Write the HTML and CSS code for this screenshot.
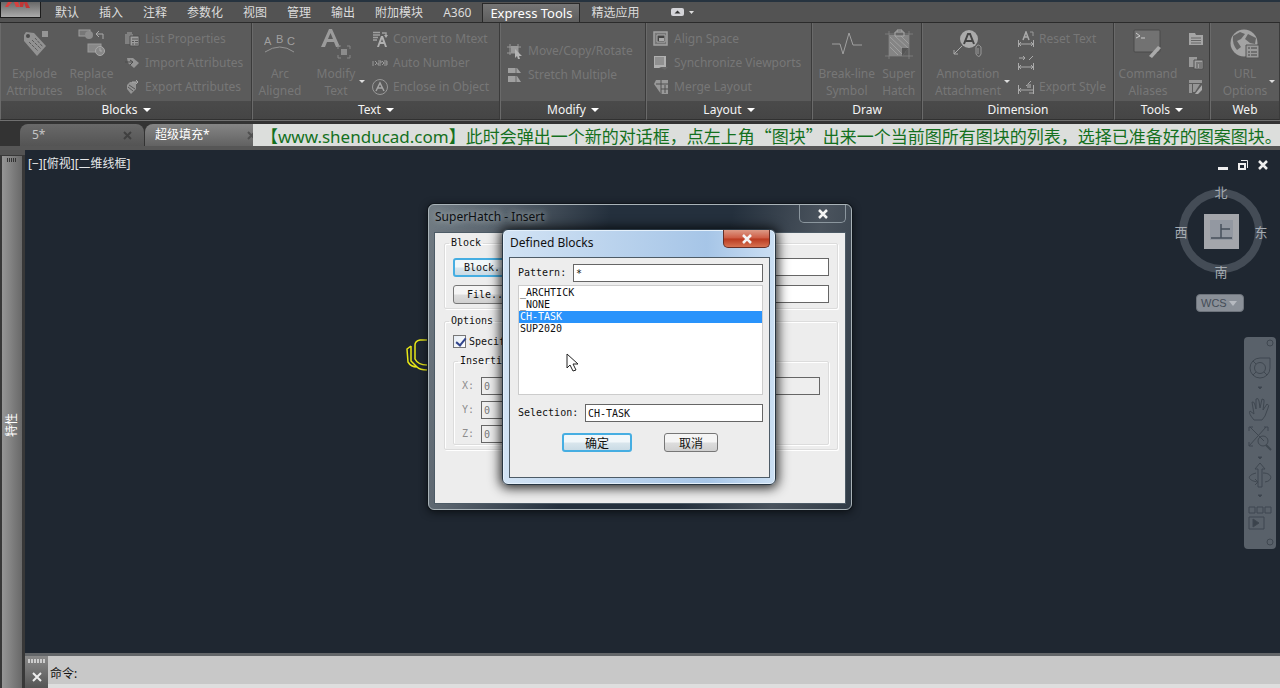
FILE: index.html
```html
<!DOCTYPE html>
<html lang="zh-CN">
<head>
<meta charset="utf-8">
<title>SuperHatch - Insert</title>
<link rel="stylesheet" href="styles.css">
</head>
<body>
<header class="topbar">
  <button class="app-button" aria-label="Application menu">
    <svg width="38" height="16" viewBox="0 0 38 16"><path d="M7 0h4L7 5H4zM13 0h4l2 5h-4z" fill="#d8403f"/><path d="M19 0h4l-1 5h-3zM23 0h3l3 6h-4z" fill="#c23636"/></svg>
  </button>
  <nav class="menu">
    <a href="#">默认</a><a href="#">插入</a><a href="#">注释</a><a href="#">参数化</a><a href="#">视图</a><a href="#">管理</a><a href="#">输出</a><a href="#">附加模块</a><a href="#">A360</a><a href="#" class="active">Express Tools</a><a href="#">精选应用</a>
    <button class="ribbon-toggle" aria-label="Minimize ribbon"><svg width="26" height="10" viewBox="0 0 26 10"><rect x="1" y="1" width="13" height="8" rx="2" fill="#d4d4d8"/><path d="M4.500 6.500L7.500 3.500l3 3z" fill="#333"/><path d="M19 4h5l-2.500 3z" fill="#ddd"/></svg></button>
  </nav>
</header>

<section class="ribbon">
  <section class="panel blocks">
    <div class="tools">
      <button class="large w57"><svg width="32" height="32" viewBox="0 0 32 32"><path d="M5 7l2-3 8 1 12 13-9 10L5 13z" fill="#929292"/><circle cx="9" cy="8" r="2" fill="#4c4c4c"/><path d="M10 14l9 9M13 12l9 9M16 10l8 9" stroke="#5b5b5b" stroke-dasharray="3 1"/><rect x="23" y="3" width="6" height="6" fill="#969696"/></svg><span>Explode<br>Attributes</span></button>
      <button class="large w57"><svg width="32" height="32" viewBox="0 0 32 32"><rect x="3" y="2" width="11" height="6" fill="#777" stroke="#a0a0a0"/><circle cx="13" cy="7" r="4" fill="#8c8c8c"/><rect x="12" y="16" width="13" height="8" fill="#888" stroke="#9b9b9b"/><circle cx="24" cy="23" r="4.500" fill="#888" stroke="#aaa"/><path d="M24 20v3h2M27 11V6h-7m3-3l-3 3 3 3" fill="none" stroke="#aaa"/></svg><span>Replace<br>Block</span></button>
      <div class="stack">
        <button><svg width="16" height="16" viewBox="0 0 16 16"><path d="M1 3h8v10H1zM3 1h5v3H3z" fill="#808080"/><path d="M6 5h9v10H6z" fill="#9c9c9c" stroke="#505050"/><path d="M8 8h6M8 10.500h2m1 0h3M8 13h2m1 0h3" stroke="#555"/></svg>List Properties</button>
        <button><svg width="16" height="16" viewBox="0 0 16 16"><path d="M3 3h6l6 5-5 5-6-5z" fill="#949494"/><path d="M1 7h7M6 5l3 2-3 3" fill="none" stroke="#4c4c4c"/></svg>Import Attributes</button>
        <button><svg width="16" height="16" viewBox="0 0 16 16"><path d="M3 6l3-3h6v7l-5 5-4-5z" fill="#949494"/><path d="M5 6l6 4M4 8l5 4" stroke="#555"/><path d="M8 3h6m-2-2l2 2-2 2" fill="none" stroke="#aaa"/></svg>Export Attributes</button>
      </div>
    </div>
    <h2>Blocks <i></i></h2>
  </section>
  <section class="panel text">
    <div class="tools">
      <button class="large w54"><svg width="32" height="32" viewBox="0 0 32 32"><g fill="#a0a0a0" font-family="Liberation Sans" font-size="11"><text x="0" y="17">A</text><text x="12" y="15">B</text><text x="23" y="17">C</text></g><path d="M1 24q15-10 29 0" fill="none" stroke="#949494"/></svg><span>Arc<br>Aligned</span></button>
      <button class="large w58 drop"><svg width="32" height="32" viewBox="0 0 32 32"><path d="M1 19L9 1h3l8 18h-4l-2-5H7l-2 5zM8 11h5L10.500 5z" fill="#9b9b9b" fill-rule="evenodd"/><path d="M18 21v-3h3m6 0h3v3m0 6v3h-3m-6 0h-3v-3" fill="none" stroke="#888"/><rect x="21" y="21" width="6" height="6" fill="#8c8c8c"/></svg><span>Modify<br>Text</span></button>
      <div class="stack">
        <button><svg width="16" height="16" viewBox="0 0 16 16"><path d="M1 1.500h7M1 4h7M1 6.500h5M1 9h4M10 2h4v3" fill="none" stroke="#a0a0a0" stroke-width="1.500"/><path d="M12 4l2 3 2-3z" fill="#aaa"/><path d="M5 16L9 5h2l4 11h-2l-1-3H8l-1 3zM9 11h2l-1-3z" fill="#b0b0b0" fill-rule="evenodd"/></svg>Convert to Mtext</button>
        <button><svg width="16" height="16" viewBox="0 0 16 16"><path d="M1 6v5M3 6l2 2-2 2M6 6h3v2H6v2h3M10 6l2 2-2 2M12 6h3v4h-3m0-2h3" fill="none" stroke="#999"/></svg>Auto Number</button>
        <button><svg width="16" height="16" viewBox="0 0 16 16"><circle cx="8" cy="8" r="7.500" fill="none" stroke="#999"/><path d="M4 12L8 4l4 8M6 9h5" fill="none" stroke="#a5a5a5" stroke-width="1.500"/></svg>Enclose in Object</button>
      </div>
    </div>
    <h2>Text <i></i></h2>
  </section>
  <section class="panel modify">
    <div class="tools">
      <div class="stack two">
        <button><svg width="16" height="16" viewBox="0 0 16 16"><path d="M3 1v11M11 1v10M0 4h14M0 10h12" stroke="#999"/><rect x="4" y="3" width="7" height="7" fill="#999"/><path d="M8 6l7 7-3 0 1 3-2 0-1-3-2 2z" fill="#b4b4b4"/></svg>Move/Copy/Rotate</button>
        <button><svg width="16" height="16" viewBox="0 0 16 16"><path d="M1 1h9l4 5H1zM1 9h9l4 6H1z" fill="#a0a0a0"/><path d="M9 1v5M9 9v6" stroke="#6a6a6a"/></svg>Stretch Multiple</button>
      </div>
    </div>
    <h2>Modify <i></i></h2>
  </section>
  <section class="panel layout">
    <div class="tools">
      <div class="stack">
        <button><svg width="16" height="16" viewBox="0 0 16 16"><path d="M1 1h13v13H1z" fill="#777" stroke="#a2a2a2" stroke-width="1.500"/><path d="M4 11V4h8v7z" fill="#444" stroke="#aaa"/><path d="M6 7h5v3H6z" fill="#aaa"/></svg>Align Space</button>
        <button><svg width="16" height="16" viewBox="0 0 16 16"><path d="M1 1h12v12H1z" fill="#b0b0b0"/><path d="M2 2h9v8H2z" fill="#909090"/><path d="M6 12h9l-3 3z" fill="#666"/></svg>Synchronize Viewports</button>
        <button><svg width="16" height="16" viewBox="0 0 16 16"><path d="M3 1h12v14H8L1 5z" fill="#999"/><path d="M3 5h12M8 1v14M8 10h7M12 6v8" stroke="#505050"/></svg>Merge Layout</button>
      </div>
    </div>
    <h2>Layout <i></i></h2>
  </section>
  <section class="panel draw">
    <div class="tools">
      <button class="large w60"><svg width="32" height="32" viewBox="0 0 32 32"><path d="M1 16h8l3 10 6-21 4 12h9" fill="none" stroke="#a0a0a0"/></svg><span>Break-line<br>Symbol</span></button>
      <button class="large w45"><svg width="32" height="32" viewBox="0 0 32 32"><path d="M6 7h20v13l-7 8H6z" fill="#858585"/><path d="M7 9l16 15M7 14l13 13M7 19l8 8M12 8l14 13M18 8l8 8" stroke="#aaa" stroke-width=".7"/><path d="M2 6h28M6 3v28M26 3v28M2 28h28" stroke="#888" stroke-width=".7"/><path d="M12 8V4h9v4zM14 4V2h5v2" fill="#666" stroke="#aaa"/><path d="M26 20h-7v8z" fill="#555"/></svg><span>Super<br>Hatch</span></button>
    </div>
    <h2>Draw</h2>
  </section>
  <section class="panel dimension">
    <div class="tools">
      <button class="large w84 drop"><svg width="32" height="32" viewBox="0 0 32 32"><circle cx="17" cy="11" r="9" fill="#aaa"/><path d="M12 16l4-10h2l4 10m-8-3h6" stroke="#444" stroke-width="2" fill="none"/><path d="M10 18l-8 8m0-4v4h4" stroke="#aaa" fill="none"/><path d="M24 26v-7q2-4 5 0v7q-2 5-5 0m2-6v6" stroke="#999" fill="none"/></svg><span>Annotation<br>Attachment</span></button>
      <div class="stack">
        <button><svg width="16" height="16" viewBox="0 0 16 16"><path d="M.5 9v7M15.500 9v7M1 13h14M3 11l-2 2 2 2M13 11l2 2-2 2" stroke="#aaa" fill="none"/><path d="M5 9l3-8 3 8M6 6h4" stroke="#aaa" stroke-width="1.500" fill="none"/><path d="M12 1h3v4" stroke="#999" fill="none"/></svg>Reset Text</button>
        <button aria-label="Update dimension"><svg width="16" height="16" viewBox="0 0 16 16"><path d="M.5 8v7M15.500 8v7M1 12h14M3 10l-2 2 2 2M13 10l2 2-2 2M1 3h6L5 1m2 2L5 5M11 5l4-4" stroke="#aaa" fill="none"/></svg></button>
        <button><svg width="16" height="16" viewBox="0 0 16 16"><path d="M.5 6v9M15.500 6v9M1 11h14M3 9l-2 2 2 2M11 14h4M8 7l5-5" stroke="#aaa" fill="none"/><path d="M9 5h4v4H9z" fill="#888"/></svg>Export Style</button>
      </div>
    </div>
    <h2>Dimension</h2>
  </section>
  <section class="panel utilities">
    <div class="tools">
      <button class="large w66"><svg width="32" height="32" viewBox="0 0 32 32"><rect x="2" y="2" width="26" height="22" rx="1" fill="#727272" stroke="#4a4a4a"/><path d="M4 5l4 3-4 2M9 10h4" stroke="#ccc" fill="none"/><path d="M17 28l9-10 3 2-9 10z" fill="#aaa"/></svg><span>Command<br>Aliases</span></button>
      <div class="stack">
        <button aria-label="System variables"><svg width="16" height="16" viewBox="0 0 16 16"><path d="M1 5V2h6l1 2h7v10H1z" fill="#a5a5a5"/><path d="M3 7h10M3 9.500h10M3 12h10" stroke="#666"/></svg></button>
        <button aria-label="List aliases"><svg width="16" height="16" viewBox="0 0 16 16"><path d="M1 2h8v10H1z" fill="#999"/><path d="M6 5h9v9H6z" fill="#a0a0a0" stroke="#505050"/><path d="M8 8h6M8 10h2m1 0h3M8 12h2m1 0h3" stroke="#555"/></svg></button>
        <button aria-label="Table editor"><svg width="16" height="16" viewBox="0 0 16 16"><path d="M1 1h13v3H1zM1 5h3v9H1zM5 5h7l-5 8H5z" fill="#959595"/><path d="M7 15l7-9v5l-4 4z" fill="#aaa"/></svg></button>
      </div>
    </div>
    <h2>Tools <i></i></h2>
  </section>
  <section class="panel web">
    <div class="tools">
      <button class="large w60 drop"><svg width="32" height="32" viewBox="0 0 32 32"><circle cx="15" cy="15" r="13.500" fill="#a3a3a3"/><path d="M4 8l7-4 5 2-4 5-4 2 4 6-4 3q-5-6-4-14zM19 6l8 4-1 6-5-1-5-4z" fill="#656565"/><path d="M17 17h13v13H17z" fill="#999" stroke="#555"/><path d="M19 20h2m1 0h6M19 24h2m1 0h6M19 27h2m1 0h6" stroke="#444"/></svg><span>URL<br>Options</span></button>
    </div>
    <h2>Web</h2>
  </section>
</section>

<div class="doc-tabs">
  <button class="doc">5*<svg width="9" height="9" viewBox="0 0 9 9"><path d="M1 1l7 7M8 1L1 8" stroke="#404040" stroke-width="2"/></svg></button>
  <button class="doc current">超级填充*<svg width="9" height="9" viewBox="0 0 9 9"><path d="M1 1l7 7M8 1L1 8" stroke="#505050" stroke-width="2"/></svg></button>
  <p class="caption">【www.shenducad.com】此时会弹出一个新的对话框，点左上角<span>“</span>图块<span>”</span>出来一个当前图所有图块的列表，选择已准备好的图案图块。</p>
</div>

<div class="main">
  <aside class="palette"><div class="grip"></div><span>特性</span></aside>
  <div class="work">
    <main class="canvas">
      <p class="view-label">[−][俯视][二维线框]</p>
      <svg class="sketch" width="30" height="34" viewBox="0 0 30 34" fill="none" stroke="#e8e818" stroke-width="1.500"><path d="M28 3H15q-5 1-5 5v14q3 6 12 6h8M6 9l-4 3 1 13q3 5 9 5 3 3 10 3l7-3M6 9v15l6 6"/></svg>
      <div class="view-tools">
        <div class="win-controls">
          <button aria-label="Minimize"><svg width="12" height="12"><path d="M1 8h10v3H1z" fill="#eee"/></svg></button>
          <button aria-label="Restore"><svg width="12" height="12" fill="none" stroke="#eee"><path d="M2 5h6v5H2z" stroke-width="2"/><path d="M4 1.500h6.500V9"/></svg></button>
          <button aria-label="Close"><svg width="12" height="12"><path d="M2 2l8 8M10 2l-8 8" stroke="#eee" stroke-width="2.500"/></svg></button>
        </div>
        <svg class="compass" width="96" height="100" viewBox="0 0 96 100"><circle cx="48" cy="49" r="38" fill="none" stroke="#444c56" stroke-width="8"/><rect x="31" y="32" width="35" height="35" fill="#a4a6ab"/><rect x="37" y="38" width="23" height="20" fill="#9398a1"/><path d="M38 56h21M48 42v14M48 47h9" stroke="#474f5b" stroke-width="1.500"/><g fill="#a5abb2" font-size="13" text-anchor="middle"><text x="48" y="15">北</text><text x="48" y="95">南</text><text x="8" y="55">西</text><text x="88" y="55">东</text></g></svg>
        <button class="wcs">WCS <svg width="8" height="5"><path d="M0 0h8L4 5z" fill="#b6bac0"/></svg></button>
        <div class="navbar">
          <svg width="28" height="208" viewBox="0 0 28 208" fill="none" stroke="#3f4750"><circle cx="24" cy="4" r="3"/><path d="M14 19h10v10a10 10 0 1 1-10-10z"/><circle cx="14" cy="29" r="5.500"/><path d="M7 22l3 3m8 8l3 3m-14 0l3-3"/><path d="M12 48h4l-2 2z" fill="#3b434c"/><path d="M8 81q-6-7-4-9l4 3-2-12q2-1 3 3l1 4V60q2-2 3 2l1 7 2-9q3 0 2 3l-1 8 4-6q3 1 1 4l-3 8-3 4z"/><path d="M4 88l14 14M20 88L3 107M3 92v-4h4m11 0h4v4M3 103v4h4"/><circle cx="17" cy="102" r="5"/><path d="M20 106l5 5" stroke-width="2"/><path d="M12 118h4l-2 2zM12 156h4l-2 2z" fill="#3b434c"/><path d="M12 148v-18H9l5-6 5 6h-3v18zM10 134c-11 3-7 8 2 9l-3-3m3 3l-3 3M17 134c10 0 10 8 2 9"/><path d="M3 168h6v6H3zm8 0h6v6h-6zm8 0h6v6h-6zM3 178h15v12H3z"/><path d="M7 180v8l6-4z" fill="#3b434c"/><circle cx="24" cy="203" r="3"/></svg>
        </div>
      </div>

      <section class="window insert" aria-label="SuperHatch - Insert">
        <header><h1>SuperHatch - Insert</h1><button class="x" aria-label="Close"><svg width="12" height="10" viewBox="0 0 12 10"><path d="M2 1l8 8M10 1L2 9" stroke="#f4f4f4" stroke-width="2.500"/></svg></button></header>
        <div class="client">
          <fieldset>
            <legend>Block</legend>
            <div class="pair"><button class="push hot">Block...</button><input aria-label="Block name"></div>
            <div class="pair"><button class="push">File...</button><input aria-label="File name"></div>
          </fieldset>
          <fieldset class="options">
            <legend>Options</legend>
            <label class="check"><input type="checkbox" checked>Specify on screen</label>
            <fieldset class="insertion">
              <legend>Insertion point</legend>
              <div class="axes">
                <label>X:<input value="0" disabled></label>
                <label>Y:<input value="0" disabled></label>
                <label>Z:<input value="0" disabled></label>
              </div>
              <input class="angle" aria-label="Rotation" disabled>
            </fieldset>
          </fieldset>
        </div>
      </section>

      <section class="window defined" aria-label="Defined Blocks">
        <header><h1>Defined Blocks</h1><button class="x" aria-label="Close"><svg width="12" height="10" viewBox="0 0 12 10"><path d="M2 1l8 8M10 1L2 9" stroke="#f4f4f4" stroke-width="2.500"/></svg></button></header>
        <form class="client">
          <label class="field pattern">Pattern: <input value="*"></label>
          <select size="4" aria-label="Blocks"><option>_ARCHTICK</option><option>_NONE</option><option selected>CH-TASK</option><option>SUP2020</option></select>
          <label class="field selection">Selection: <input value="CH-TASK"></label>
          <div class="actions"><button type="button" class="push hot ok">确定</button><button type="button" class="push">取消</button></div>
        </form>
      </section>
      <svg class="pointer" width="13" height="20" viewBox="0 0 13 20"><path d="M1 1v14l3-3 3 6 3-1-3-6h5z" fill="#fff" stroke="#222"/></svg>
    </main>
    <footer class="command">
      <div class="handle"><div class="grip"></div><svg width="10" height="10"><path d="M1 1l8 8M9 1L1 9" stroke="#eee" stroke-width="2"/></svg></div>
      <label>命令:<input aria-label="命令"></label>
    </footer>
  </div>
</div>
</body>
</html>
```
FILE: styles.css
```css
* { box-sizing: border-box; }
body {
  margin: 0; height: 100vh; display: flex; flex-direction: column; overflow: hidden;
  background: #535353; color: #fff;
  font: 12px/16px "Noto Sans", "Noto Sans CJK SC", sans-serif;
}
button { margin: 0; padding: 0; border: 0; background: none; color: inherit; font: inherit; }
a { color: inherit; text-decoration: none; }
h1, h2, p { margin: 0; font-size: inherit; font-weight: normal; }
svg { flex: none; }

/* Menu row */
.topbar { display: flex; height: 22px; background: #535353; border-top: 2px solid #26333f; }
.app-button { display: flex; align-items: flex-start; width: 41px; height: 16px; background: linear-gradient(#686868, #aaa); border: 1px solid #1c1c1c; border-top: 0; }
.menu { display: flex; flex: 1; align-items: flex-end; padding-left: 4px; color: #dcdcdc; white-space: nowrap; }
.menu a { padding: 1px 10px 0; height: 19px; line-height: 18px; }
.menu .active { padding: 0 7px; margin: 0 1px; background: linear-gradient(#757575, #5d5d5d); border: 1px solid #292929; border-bottom: 0; color: #fff; font-size: 13px; }
.ribbon-toggle { margin-left: 21px; height: 18px; }

/* Ribbon */
.ribbon { display: grid; grid-template-columns: 252fr 248fr 146fr 166fr 110fr 192fr 96fr 70fr; height: 98px; border-top: 1px solid #2b2b2b; background: #5b5b5b; }
.panel { display: flex; flex-direction: column; min-width: 0; border-right: 1px solid #3b3b3b; border-left: 1px solid #6a6a6a; border-bottom: 1px solid #303030; }
.tools { flex: 1; display: flex; padding-top: 5px; color: #777; white-space: nowrap; }
.panel h2 { height: 18px; line-height: 18px; text-align: center; background: linear-gradient(#4a4a4a, #454545); color: #f4f4f4; }
h2 i { display: inline-block; margin-left: 2px; border: 4px solid transparent; border-top-color: #fff; border-bottom: 0; vertical-align: 2px; }
.large { display: flex; flex-direction: column; align-items: center; line-height: 17px; position: relative; }
.large span { margin-top: 5px; }
.w45 { width: 45px; } .w54 { width: 54px; } .w57 { width: 57px; } .w58 { width: 58px; } .w60 { width: 60px; } .w66 { width: 66px; } .w84 { width: 84px; }
.drop::after { content: ""; position: absolute; right: 0; bottom: 18px; border: 3px solid transparent; border-top-color: #ddd; border-bottom: 0; }
.stack { display: flex; flex-direction: column; margin-top: -1px; }
.stack button { display: flex; align-items: center; gap: 5px; height: 24px; }
.stack.two { padding-top: 12px; }
.blocks .tools { padding-left: 5px; }
.blocks .stack { padding-left: 4px; }
.text .stack { padding-left: 7px; }
.modify .tools { padding-left: 6px; }
.layout .tools { padding-left: 6px; }
.draw .tools { padding-left: 4px; }
.dimension .tools { padding-left: 3px; }
.dimension .stack { padding-left: 8px; }
.utilities .stack { padding-left: 7px; }
.web .tools { padding-left: 4px; }

/* Drawing tabs */
.doc-tabs { display: flex; height: 30px; padding: 3px 0 0 20px; background: #333; border-top: 1px solid #707070; border-bottom: 4px solid #565656; }
.doc { display: flex; align-items: center; justify-content: space-between; width: 124px; padding: 0 12px; border-radius: 8px 8px 0 0; background: linear-gradient(#696969, #545454); color: #c4c4c4; }
.doc.current { width: 120px; margin: 0 -12px 0 1px; padding: 0 9px 0 10px; background: linear-gradient(#858585, #626262); color: #fff; }
.caption { position: relative; flex: 1; min-width: 0; height: 22px; padding-left: 8px; background: #dcdedc; color: #14701e; font-size: 17px; line-height: 23px; white-space: nowrap; }
.caption span { font-family: "Noto Sans CJK SC", sans-serif; }

/* Work area */
.main { flex: 1; display: flex; min-height: 0; }
.palette { width: 25px; display: flex; flex-direction: column; align-items: center; margin-top: 5px; border: solid #383838; border-width: 1px 3px 0 2px; background: linear-gradient(90deg, #969696, #686868); }
.palette span { margin: auto; writing-mode: vertical-rl; text-orientation: sideways; transform: rotate(180deg); line-height: 14px; }
.grip { width: 10px; height: 4px; margin-top: 2px; background: repeating-linear-gradient(90deg, #333 0 1px, transparent 1px 2px); }
.work { flex: 1; min-width: 0; display: flex; flex-direction: column; }
.canvas { position: relative; flex: 1; background: #1f2731; }
.view-label { padding: 6px 3px; color: #e4e6e8; }
.sketch { position: absolute; left: 380px; top: 187px; }
.view-tools { position: absolute; top: 9px; right: 4px; display: flex; flex-direction: column; align-items: flex-end; }
.win-controls { display: flex; gap: 8px; padding-right: 7px; }
.win-controls svg { display: block; }
.compass { margin: 11px 7px 0 0; }
.wcs { display: flex; align-items: center; justify-content: space-between; width: 48px; height: 18px; margin: 12px 32px 0 0; padding: 0 6px 0 4px; border: 1px solid #6d737b; border-radius: 4px; background: #8a9098; color: #454d57; font: 11px "Liberation Sans", sans-serif; }
.navbar { margin-top: 25px; padding: 2px; border-radius: 4px; background: #59616a; }
.navbar svg { display: block; }

/* Dialogs */
.window { position: absolute; display: flex; flex-direction: column; border: 1px solid #a9b3b8; border-radius: 6px; font: 10px/12px "DejaVu Sans Mono", "Noto Sans CJK SC", monospace; color: #111; }
.window header { display: flex; justify-content: space-between; height: 27px; font: 12px/24px "Noto Sans", sans-serif; }
.x { display: flex; justify-content: center; align-items: center; width: 47px; height: 18px; border: 1px solid #8b969e; border-top: 0; border-radius: 0 0 5px 5px; }
.client { flex: 1; background: #ededed; border: 1px solid #4d5b66; }
.window input:not([type=checkbox]) { min-width: 0; height: 18px; padding: 0 2px; border: 1px solid #666; border-radius: 0; background: #fff; color: #111; font: inherit; }
.push { height: 19px; min-width: 54px; border: 1px solid #777; border-radius: 3px; background: linear-gradient(#f5f5f5 45%, #dcdcdc 55%, #d0d0d0); color: #111; font: 12px/16px "Noto Sans CJK SC", sans-serif; }
.push.hot { border: 2px solid #46aee2; background: linear-gradient(#f1f7fa 45%, #d8e5ec 55%, #cadbe5); }

.insert { left: 403px; top: 54px; width: 424px; height: 306px; padding: 0 5px 5px; background: linear-gradient(100deg, #717b83 0, #59636d 70px, #24303d 180px, #24303d 300px, #4a535d 390px, #303b46); box-shadow: 0 0 0 1px #10161c, 0 2px 8px #0a0e12; }
.insert header h1 { padding-left: 1px; color: #0c0f12; text-shadow: 0 0 6px #a3abb0, 0 0 9px #a3abb0; }
.insert .client { padding: 3px 7px 0 9px; }
fieldset { margin: 0; padding: 0 8px; min-width: 0; border: 1px solid #dcdcdc; box-shadow: inset 1px 1px #fff, 1px 1px #fff; border-radius: 2px; }
legend { padding: 0 2px; margin-left: -4px; line-height: 14px; }
.pair { display: flex; justify-content: space-between; margin-bottom: 8px; }
.pair .push { width: 70px; font: inherit; }
.pair:nth-child(2) { margin-top: 8px; }
.pair:last-child { margin-bottom: 4px; }
.pair input { width: 220px; }
.options { margin-top: 5px; }
.check { display: flex; align-items: center; gap: 3px; margin-top: 7px; }
.check input { margin: 0; width: 13px; height: 13px; appearance: none; border: 1px solid #777; background: #e6edf5 linear-gradient(135deg, transparent, #fff); }
.check input:checked::after { content: ""; display: block; width: 4px; height: 8px; margin: 0 0 0 4px; border: solid #32458c; border-width: 0 2px 2px 0; transform: rotate(40deg); }
.insertion { display: flex; justify-content: space-between; align-items: flex-start; margin: 6px 0 4px; padding: 0 8px 1px; }
.axes { display: grid; gap: 6px; padding-top: 9px; color: #8d8d8d; }
.axes label { display: flex; align-items: center; gap: 7px; }
.window .insertion input:disabled { width: 100px; background: #eee; color: #777; }
.insertion .angle { margin-top: 9px; }

.defined { left: 477px; top: 79px; width: 274px; height: 256px; padding: 0 5px 6px 6px; border-color: #283642; background: linear-gradient(90deg, #d2e3f4, #a6c5e7 75%, #cbdff3); box-shadow: inset 0 0 0 1px #e4f0fb, 0 1px 12px 2px rgba(0, 0, 0, .85); }
.defined header h1 { line-height: 26px; padding-left: 1px; }
.defined .x { background: linear-gradient(#dd9a86, #cd5b43 48%, #b93a20 52%, #d77251); border-color: #662e26; }
.defined .client { display: flex; flex-direction: column; padding: 6px 6px 0 8px; }
.field { display: flex; align-items: center; justify-content: space-between; }
.pattern input { width: 190px; }
.selection input { width: 178px; }
.defined select { height: 110px; margin: 3px 0 9px; padding: 1px 0 0; overflow: hidden; border: 1px solid #ccc; border-radius: 0; background: #fff; color: #111; font: inherit; outline: 0; }
option { padding: 0 1px; min-height: 12px; line-height: 12px; }
option:checked { background: #2993fb linear-gradient(#2993fb, #2993fb); color: #fff; }
.actions { display: flex; gap: 32px; padding-left: 44px; margin-top: 11px; }
.ok { width: 70px; }
.pointer { position: absolute; left: 541px; top: 203px; }

/* Command line */
.command { display: flex; height: 35px; border-top: 3px solid #636669; background: #c8c8c8; color: #111; }
.handle { width: 23px; display: flex; flex-direction: column; align-items: center; justify-content: space-between; padding: 1px 0 6px; background: linear-gradient(#8a8a8a, #555); }
.command .grip { width: 18px; background: repeating-linear-gradient(90deg, #ccc 0 2px, transparent 2px 3px); }
.command label { flex: 1; display: flex; align-items: center; padding: 8px 2px 0; border-bottom: 4px solid #dedede; line-height: 20px; }
.command input { flex: 1; border: 0; outline: 0; background: none; font: inherit; }
```
